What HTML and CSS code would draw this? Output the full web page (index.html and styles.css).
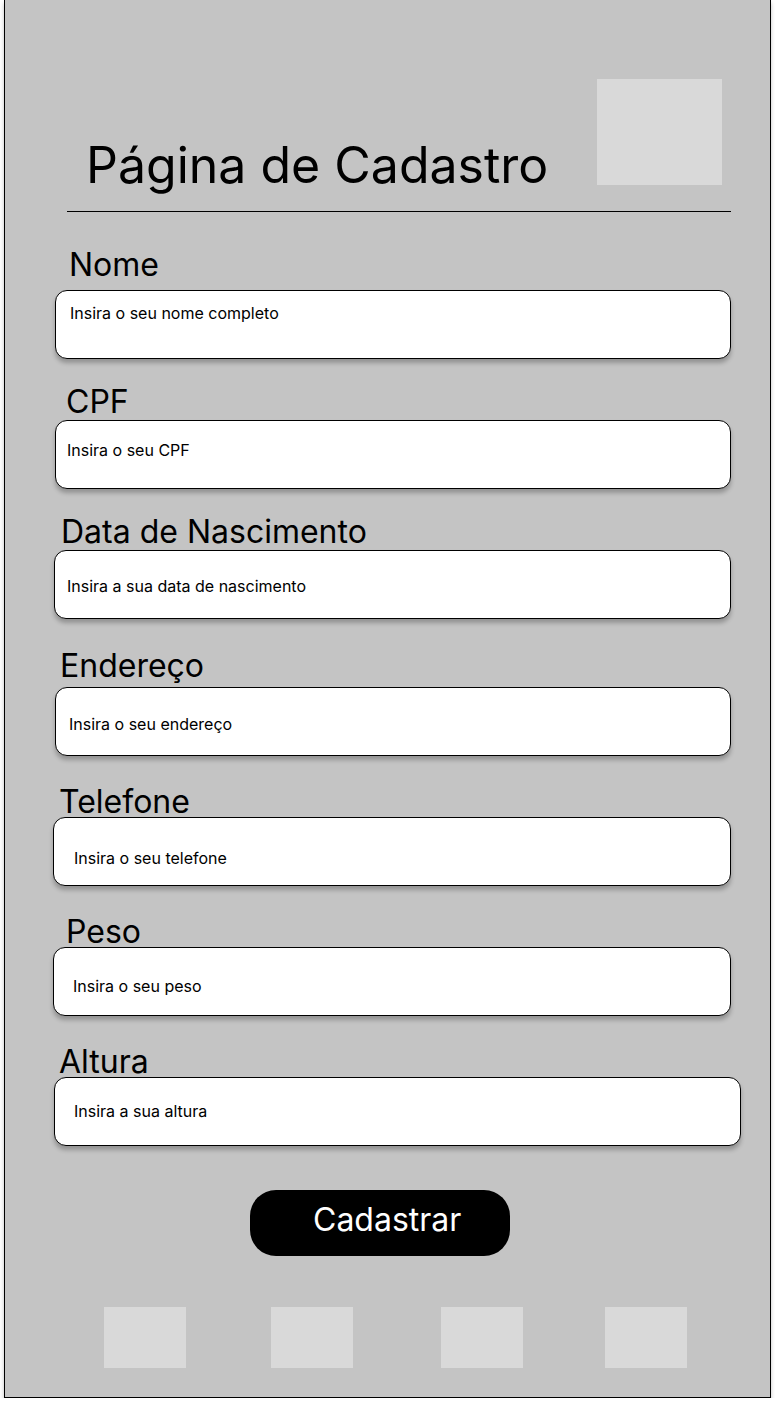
FILE: index.html
```html
<!DOCTYPE html>
<html lang="pt-BR">
<head>
<meta charset="utf-8">
<title>Página de Cadastro</title>
<link rel="stylesheet" href="styles.css">
</head>
<body>
<div class="frame">
  <header class="header">
    <h1 class="title">Página de Cadastro</h1>
    <div class="logo-box"></div>
  </header>
  <div class="rule"></div>
  <form class="form">
    <div class="field f-nome">
      <label class="label">Nome</label>
      <div class="input"><span class="ph">Insira o seu nome completo</span></div>
    </div>
    <div class="field f-cpf">
      <label class="label">CPF</label>
      <div class="input"><span class="ph">Insira o seu CPF</span></div>
    </div>
    <div class="field f-data">
      <label class="label">Data de Nascimento</label>
      <div class="input"><span class="ph">Insira a sua data de nascimento</span></div>
    </div>
    <div class="field f-end">
      <label class="label">Endereço</label>
      <div class="input"><span class="ph">Insira o seu endereço</span></div>
    </div>
    <div class="field f-tel">
      <label class="label">Telefone</label>
      <div class="input"><span class="ph">Insira o seu telefone</span></div>
    </div>
    <div class="field f-peso">
      <label class="label">Peso</label>
      <div class="input"><span class="ph">Insira o seu peso</span></div>
    </div>
    <div class="field f-alt">
      <label class="label">Altura</label>
      <div class="input"><span class="ph">Insira a sua altura</span></div>
    </div>
    <div class="actions">
      <button type="button" class="btn">Cadastrar</button>
    </div>
  </form>
  <nav class="footer">
    <div class="tile"></div>
    <div class="tile"></div>
    <div class="tile tile-3"></div>
    <div class="tile tile-4"></div>
  </nav>
</div>
</body>
</html>
```

FILE: styles.css
```css
* { box-sizing: border-box; }

html, body {
  margin: 0;
  padding: 0;
  background: #ffffff;
}

body {
  font-family: Inter, "Noto Sans", sans-serif;
  color: #000;
}

.frame {
  margin: -1px 0 0 4px;
  width: 767px;
  height: 1399px;
  background: #c4c4c4;
  border: 1px solid #000;
  box-shadow: 0 4px 4px rgba(0, 0, 0, 0.25);
  display: flex;
  flex-direction: column;
}

.header {
  display: flex;
  align-items: flex-start;
  padding: 79px 48px 0 0;
}

.title {
  margin: 56px 0 0 81px;
  font-size: 50px;
  font-weight: 400;
  line-height: 60px;
  white-space: nowrap;
}

.logo-box {
  margin-left: auto;
  width: 125px;
  height: 106px;
  background: #d9d9d9;
}

.rule {
  margin: 16px 39px 0 62px;
  border-top: 1px solid #000;
}

.form {
  display: flex;
  flex-direction: column;
  margin: 0;
}

.field {
  display: flex;
  flex-direction: column;
  margin-top: var(--mt);
}

.label {
  display: block;
  margin: 0 0 var(--lb) var(--lx);
  font-size: 32px;
  line-height: 35px;
  white-space: nowrap;
}

.input {
  height: 69px;
  margin: 0 var(--ir, 39px) 0 var(--ix);
  background: #fff;
  border: 1px solid #000;
  border-radius: 12px;
  box-shadow: 0 4px 4px rgba(0, 0, 0, 0.25);
  padding: var(--pt) 0 0 var(--pl);
}

.ph {
  display: block;
  font-size: 16px;
  line-height: 18px;
  white-space: nowrap;
}

.f-nome { --mt: 35px; --lx: 64px; --lb: 8px;  --ix: 50px; --pt: 13px; --pl: 14px; }
.f-cpf  { --mt: 25px; --lx: 61px; --lb: 1px;  --ix: 50px; --pt: 20px; --pl: 11px; }
.f-data { --mt: 25px; --lx: 56px; --lb: 1px;  --ix: 49px; --pt: 26px; --pl: 12px; }
.f-end  { --mt: 29px; --lx: 55px; --lb: 4px;  --ix: 50px; --pt: 27px; --pl: 13px; }
.f-tel  { --mt: 28px; --lx: 54px; --lb: -2px; --ix: 48px; --pt: 31px; --pl: 20px; }
.f-peso { --mt: 28px; --lx: 61px; --lb: -2px; --ix: 48px; --pt: 29px; --pl: 19px; }
.f-alt  { --mt: 28px; --lx: 54px; --lb: -2px; --ix: 49px; --pt: 24px; --pl: 19px; --ir: 29px; }

.actions {
  display: flex;
  margin-top: 44px;
  padding-left: 245px;
}

.btn {
  width: 260px;
  height: 66px;
  border: none;
  border-radius: 26px;
  background: #000;
  color: #fff;
  font-family: Inter, "Noto Sans", sans-serif;
  font-size: 32px;
  line-height: 36px;
  text-align: left;
  padding: 0 0 6px 63px;
  cursor: pointer;
}

.footer {
  display: flex;
  gap: 85px;
  margin-top: 51px;
  padding-left: 99px;
}

.tile {
  width: 82px;
  height: 61px;
  background: #d9d9d9;
}

.tile-3 { margin-left: 3px; }
.tile-4 { margin-left: -3px; }
```
